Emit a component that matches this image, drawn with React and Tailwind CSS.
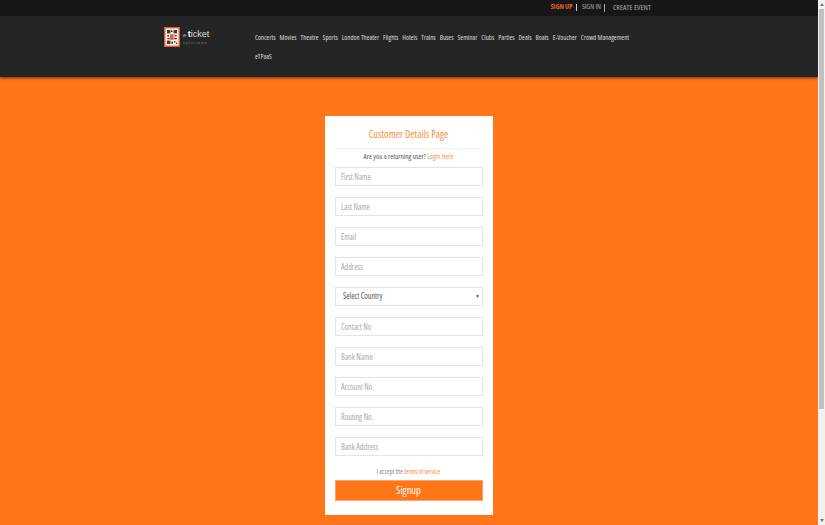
import React from 'react'

const NAV = ['Concerts', 'Movies', 'Theatre', 'Sports', 'London Theater', 'Flights', 'Hotels', 'Trains', 'Buses', 'Seminar', 'Clubs', 'Parties', 'Deals', 'Boats', 'E-Voucher', 'Crowd Management']
const BEFORE = ['First Name', 'Last Name', 'Email', 'Address']
const AFTER = ['Contact No', 'Bank Name', 'Account No.', 'Routing No.', 'Bank Address']

function Logo() {
  return (
    <div className="flex items-start gap-[3px]">
      <svg width="16" height="20" viewBox="0 0 16 20">
        <rect x="0.7" y="0.7" width="14.6" height="18.6" fill="#f1ece8" stroke="#e8572a" strokeWidth="1.4" />
        <g fill="#3a3a3a">
          <rect x="3" y="3" width="3.4" height="3.4" />
          <rect x="9.6" y="3" width="3.4" height="3.4" />
          <rect x="3" y="13.6" width="3.4" height="3.4" />
          <rect x="7" y="3.4" width="1.6" height="1.6" />
          <rect x="3.4" y="8" width="1.6" height="1.6" />
          <rect x="3.4" y="11" width="2.4" height="1.2" />
          <rect x="10.6" y="8" width="2" height="1.4" />
          <rect x="10" y="11" width="2.8" height="1.2" />
          <rect x="10" y="14" width="1.4" height="1.4" />
          <rect x="12" y="15.6" width="1.2" height="1.4" />
          <rect x="7.4" y="14.6" width="1.6" height="2.2" />
        </g>
        <rect x="6.2" y="7.2" width="3.4" height="5.6" fill="#e8572a" />
      </svg>
      <div className="flex flex-col pt-[2px]">
        <div className="text-[9px] leading-[11px] text-[#dddddd] font-['Liberation_Sans',Arial,sans-serif]">
          <span className="italic text-[6px] text-[#bbbbbb] pr-[1.5px]">e</span><span className="font-bold text-white">t</span>icket
        </div>
        <div className="text-[3.5px] leading-[5px] tracking-[1.2px] text-[#8a8a8a] font-['Liberation_Sans',Arial,sans-serif]">solutions</div>
      </div>
    </div>
  )
}

function Field({ label }) {
  return (
    <input
      placeholder={label}
      className="w-full h-[19.5px] border border-[#e4e4e4] bg-white px-[5.5px] text-[8px] outline-none placeholder:text-[#a8a8a8]"
    />
  )
}

export default function App() {
  return (
    <div className="flex h-[525px] w-[825px] overflow-hidden font-['Open_Sans',Roboto,sans-serif] [font-stretch:75%]">
      <div className="flex-1 flex flex-col bg-[#ff7619]">
        {/* Top strip */}
        <div className="h-[16px] bg-[#171717] flex items-center pb-px pl-[550.5px] text-[7px] text-[#aaaaaa]">
          <span className="font-bold text-[#e9602a] pr-[4px]">SIGN UP</span>
          <span className="w-px h-[7px] bg-[#cccccc]" />
          <span className="pl-[4.5px] pr-[3.5px]">SIGN IN</span>
          <span className="w-px h-[8px] bg-[#aaaaaa]" />
          <span className="pl-[7.5px] text-[7.8px]">CREATE EVENT</span>
        </div>

        {/* Main nav */}
        <div className="h-[61px] bg-[#252525] flex shadow-[0_1px_3px_rgba(60,25,0,0.75)] pl-[164px]">
          <div className="w-[91px] pt-[11px]"><Logo /></div>
          <div className="w-[385px] flex flex-wrap gap-x-[4px] content-start text-[6.9px] leading-[19px] text-[#dcdcdc] pt-[12px]">
            {NAV.map((n) => <span key={n}>{n}</span>)}
            <span>eTPaaS</span>
          </div>
        </div>

        {/* Form card */}
        <div className="flex justify-center pt-[39px] pr-[1px]">
          <div className="w-[168px] h-[399px] bg-white px-[10px] pt-[12px]">
            <h1 className="text-center text-[10.4px] leading-[12px] text-[#ff8a3c] pb-[8px] border-b border-[#f2f2f2]">Customer Details Page</h1>
            <p className="text-center text-[7.25px] leading-[9px] text-[#555555] pt-[3px] pb-[5.5px]">
              Are you a returning user? <span className="text-[#ff8a3c]">Login here</span>
            </p>
            <div className="flex flex-col gap-[10.5px]">
              {BEFORE.map((l) => <Field key={l} label={l} />)}
              <div className="h-[19.5px] border border-[#e4e4e4] flex items-center justify-between pl-[7.5px] pr-[1.5px] text-[8px] text-[#555555]">
                <span>Select Country</span>
                <span className="text-[5px]">▼</span>
              </div>
              {AFTER.map((l) => <Field key={l} label={l} />)}
            </div>
            <p className="text-center text-[6.7px] leading-[8px] text-[#888888] pt-[11.5px] pb-0">
              I accept the <span className="text-[#ff8a3c]">terms of service</span>
            </p>
            <button className="w-full h-[21.5px] bg-[#ff7619] border border-[#ffa366] text-white text-[10.5px]">Signup</button>
          </div>
        </div>
      </div>

      {/* Scrollbar */}
      <div className="w-[7px] bg-[#f1f1f1] flex flex-col px-px">
        <div className="h-[9px] flex items-center justify-center">
          <div className="border-x-[2.5px] border-b-[3px] border-x-transparent border-b-[#777777]" />
        </div>
        <div className="h-[400px] bg-[#c1c1c1]" />
        <div className="mt-auto h-[9px] flex items-center justify-center">
          <div className="border-x-[2.5px] border-t-[3px] border-x-transparent border-t-[#777777]" />
        </div>
      </div>
    </div>
  )
}
